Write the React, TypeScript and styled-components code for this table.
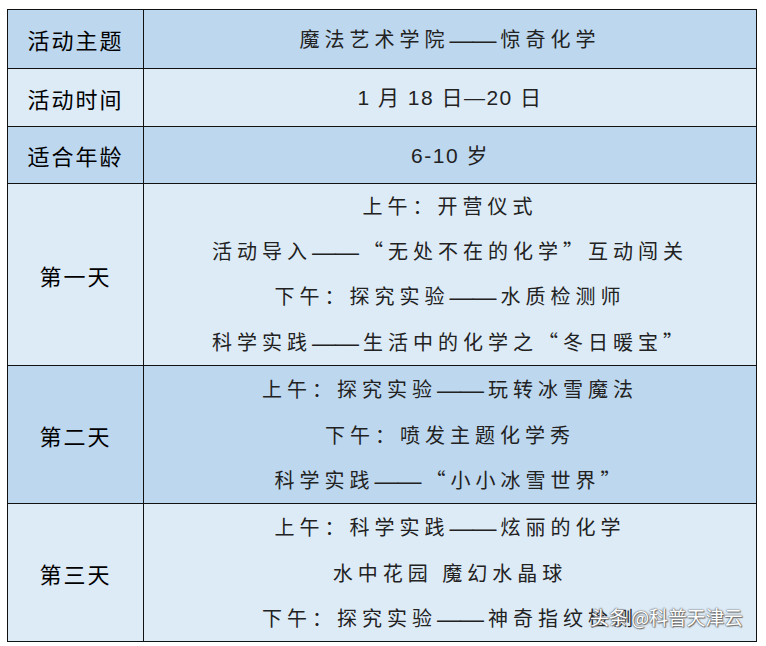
import React from 'react';
import styled, { createGlobalStyle } from 'styled-components';

const GlobalStyle = createGlobalStyle`
    html, body {
        margin: 0;
        padding: 0;
        background: #ffffff;
    }
    body {
        font-family: "Noto Sans CJK SC", "Noto Sans", sans-serif;
    }
`;

const Page = styled.div`
    position: relative;
    width: 766px;
    height: 646px;
    padding: 9px 0 0 7px;
    box-sizing: border-box;
`;

const Table = styled.table`
    width: 750px;
    border-collapse: collapse;
    table-layout: fixed;
    border: 1.5px solid #111;
`;

const Row = styled.tr<{ $dark?: boolean }>`
    background: ${props => props.$dark ? '#bdd7ee' : '#ddebf7'};
`;

const LabelCell = styled.td<{ $height: number }>`
    width: 136px;
    height: ${props => props.$height}px;
    border: 1px solid #111;
    padding: 0;
    text-align: center;
    vertical-align: middle;
    font-family: "Noto Sans CJK SC", sans-serif;
    font-size: 22px;
    font-weight: 400;
    letter-spacing: 2px;
    color: #000;
    box-sizing: border-box;
`;

const ValueCell = styled.td<{ $latin?: boolean }>`
    border: 1px solid #111;
    padding: 0;
    text-align: center;
    vertical-align: middle;
    font-family: ${props => props.$latin
        ? '"Liberation Sans", "Noto Sans CJK SC", sans-serif'
        : '"Noto Sans CJK SC", sans-serif'};
    font-size: ${props => props.$latin ? '21px' : '20px'};
    font-weight: 400;
    letter-spacing: ${props => props.$latin ? '1.5px' : '5px'};
    color: #222;
`;

const Line = styled.div<{ $lh?: number }>`
    line-height: ${props => props.$lh ?? 45}px;
    white-space: nowrap;
`;

// the long double dash, kept as one unbroken stroke
const Dash = styled.span`
    font-family: "Liberation Sans", sans-serif;
    font-size: 24px;
    letter-spacing: -1px;
    margin-right: 5px;
    vertical-align: -1px;
`;

const Watermark = styled.div`
    position: absolute;
    left: 590px;
    top: 604px;
    font-family: "Noto Sans CJK SC", sans-serif;
    font-size: 19px;
    line-height: 26px;
    color: #ffffff;
    letter-spacing: -0.3px;
    text-shadow: 0 0 1px #555, 0 0 2px #666, 1px 1px 1px #777;
    white-space: nowrap;
`;

interface ScheduleRow {
    label: string;
    height: number;
    dark?: boolean;
    latin?: boolean;
    lines: string[];
    lineHeight?: number;
}

const rows: ScheduleRow[] = [
    { label: '活动主题', height: 59, dark: true, lines: ['魔法艺术学院——惊奇化学'] },
    { label: '活动时间', height: 58, latin: true, lines: ['1 月 18 日—20 日'] },
    { label: '适合年龄', height: 57, dark: true, latin: true, lines: ['6-10 岁'] },
    {
        label: '第一天', height: 181, lineHeight: 44.5,
        lines: [
            '上午：开营仪式',
            '活动导入——“无处不在的化学”互动闯关',
            '下午：探究实验——水质检测师',
            '科学实践——生活中的化学之“冬日暖宝”',
        ],
    },
    {
        label: '第二天', height: 137, dark: true,
        lines: [
            '上午：探究实验——玩转冰雪魔法',
            '下午：喷发主题化学秀',
            '科学实践——“小小冰雪世界”',
        ],
    },
    {
        label: '第三天', height: 135,
        lines: [
            '上午：科学实践——炫丽的化学',
            '水中花园 魔幻水晶球',
            '下午：探究实验——神奇指纹检测',
        ],
    },
];

const renderLine = (line: string) => {
    const parts = line.split('——');
    return parts.map((part, index) => (
        <React.Fragment key={index}>
            {index > 0 && <Dash>——</Dash>}
            {part}
        </React.Fragment>
    ));
};

const App: React.FC = () => {
    return (
        <Page>
            <GlobalStyle />
            <Table>
                <tbody>
                    {rows.map(row => (
                        <Row key={row.label} $dark={row.dark}>
                            <LabelCell $height={row.height}>{row.label}</LabelCell>
                            <ValueCell $latin={row.latin}>
                                {row.lines.map(line => (
                                    <Line key={line} $lh={row.lineHeight}>{renderLine(line)}</Line>
                                ))}
                            </ValueCell>
                        </Row>
                    ))}
                </tbody>
            </Table>
            <Watermark>头条 @科普天津云</Watermark>
        </Page>
    );
};

export default App;
